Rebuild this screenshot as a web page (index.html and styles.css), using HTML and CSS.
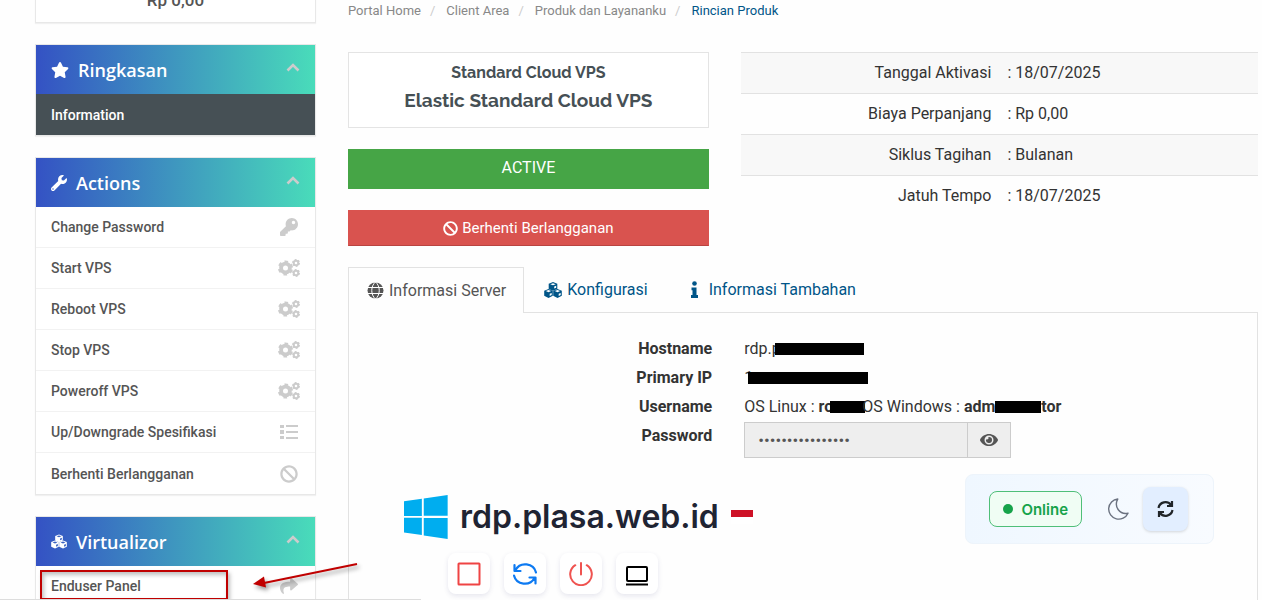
FILE: index.html
```html
<!DOCTYPE html>
<html lang="id">
<head>
    <meta charset="UTF-8">
    <meta name="viewport" content="width=device-width, initial-scale=1.0">
    <title>Rincian Produk</title>
    <link rel="stylesheet" href="styles.css">
</head>
<body>
    <!-- shared icons -->
    <svg class="sprite" aria-hidden="true">
        <symbol id="chevron" viewBox="0 0 14 9"><path d="M1.5 7.5L7 2l5.5 5.5" fill="none" stroke="currentColor" stroke-width="2.6"/></symbol>
        <symbol id="cogs" viewBox="0 0 22 18">
            <g fill="none" stroke="currentColor">
                <circle cx="7.500" cy="9" r="4.400" stroke-width="3.800"/>
                <circle cx="7.500" cy="9" r="6.500" stroke-width="2.200" stroke-dasharray="3.600 3.207" stroke-dashoffset="-1.600"/>
                <circle cx="18" cy="4" r="2.300" stroke-width="2"/>
                <circle cx="18" cy="4" r="3.300" stroke-width="1.400" stroke-dasharray="1.800 1.656"/>
                <circle cx="18" cy="14" r="2.300" stroke-width="2"/>
                <circle cx="18" cy="14" r="3.300" stroke-width="1.400" stroke-dasharray="1.800 1.656"/>
            </g>
        </symbol>
        <symbol id="ban" viewBox="0 0 512 512"><path fill="currentColor" d="M256 8C119.034 8 8 119.033 8 256s111.034 248 248 248 248-111.034 248-248S392.967 8 256 8zm130.108 117.892c65.448 65.448 70 165.481 20.677 235.637L150.470 105.216c70.204-49.356 170.226-44.735 235.638 20.676zM125.892 386.108c-65.448-65.448-70-165.481-20.677-235.637L361.530 406.784c-70.203 49.356-170.226 44.736-235.638-20.676z"/></symbol>
        <symbol id="cubes" viewBox="0 0 18 16">
            <g fill="currentColor">
                <path d="M9 0l4.300 1.700v5.300L9 8.800 4.700 7V1.700z"/>
                <path d="M4.500 7l4.300 1.700v5.100L4.500 15.900.2 13.800V8.700z"/>
                <path d="M13.500 7l4.300 1.700v5.100l-4.300 2.100-4.300-2.100V8.700z"/>
            </g>
            <path class="cut" d="M6.300 2.200L9 3.300l2.700-1.100L9 1.200zM10.200 6.600V4.600l2-.8v2zM1.800 9.100l2.700 1.100 2.700-1.100-2.700-1zM5.700 14v-2.300l2-.8v2.200zM10.800 9.100l2.700 1.100 2.700-1.100-2.700-1zM14.700 14v-2.300l2-.8v2.200z"/>
        </symbol>
    </svg>

    <div class="page">
        <aside class="sidebar">
            <div class="panel credit">Rp 0,00</div>

            <section class="panel">
                <h3 class="panel-head">
                    <svg width="18" height="16" viewBox="0 0 576 512"><path fill="currentColor" d="M259.300 17.800L194 150.200 47.900 171.500c-26.200 3.800-36.700 36.100-17.700 54.600l105.700 103-25 145.500c-4.500 26.300 23.200 46 46.400 33.700L288 439.600l130.700 68.700c23.200 12.200 50.900-7.400 46.400-33.700l-25-145.500 105.700-103c19-18.500 8.500-50.800-17.700-54.600L382 150.200 316.700 17.800c-11.700-23.600-45.600-23.900-57.400 0z"/></svg>
                    Ringkasan
                    <svg class="chevron" width="14" height="9"><use href="#chevron"/></svg>
                </h3>
                <a href="#" class="item active">Information</a>
            </section>

            <section class="panel">
                <h3 class="panel-head">
                    <svg width="16" height="16" viewBox="0 0 512 512"><path fill="currentColor" d="M507.730 109.100c-2.240-9.030-13.540-12.090-20.120-5.510l-74.360 74.360-67.880-11.310-11.310-67.880 74.360-74.360c6.620-6.620 3.430-17.900-5.660-20.160-47.380-11.740-99.550.91-136.580 37.930-39.640 39.640-50.550 97.100-34.050 147.200L18.740 402.760c-24.990 24.990-24.990 65.510 0 90.500 24.990 24.990 65.510 24.990 90.500 0l213.210-213.210c50.120 16.710 107.470 5.680 147.370-34.220 37.070-37.070 49.700-89.320 37.910-136.730zM64 472c-13.250 0-24-10.750-24-24 0-13.260 10.750-24 24-24s24 10.740 24 24c0 13.250-10.750 24-24 24z"/></svg>
                    Actions
                    <svg class="chevron" width="14" height="9"><use href="#chevron"/></svg>
                </h3>
                <a href="#" class="item">Change Password
                    <span class="icon"><svg width="18" height="18" viewBox="0 0 512 512"><path fill="currentColor" d="M512 176.001C512 273.203 433.202 352 336 352c-11.220 0-22.190-1.062-32.827-3.069l-24.012 27.014A23.999 23.999 0 0 1 261.223 384H224v40c0 13.255-10.745 24-24 24h-40v40c0 13.255-10.745 24-24 24H24c-13.255 0-24-10.745-24-24v-78.059c0-6.365 2.529-12.470 7.029-16.971l161.802-161.802C163.108 213.814 160 195.271 160 176 160 78.798 238.797.001 335.999 0 433.488-.001 512 78.511 512 176.001zM336 128c0 26.510 21.490 48 48 48s48-21.490 48-48-21.490-48-48-48-48 21.490-48 48z"/></svg></span>
                </a>
                <a href="#" class="item">Start VPS <span class="icon"><svg width="22" height="18"><use href="#cogs"/></svg></span></a>
                <a href="#" class="item">Reboot VPS <span class="icon"><svg width="22" height="18"><use href="#cogs"/></svg></span></a>
                <a href="#" class="item">Stop VPS <span class="icon"><svg width="22" height="18"><use href="#cogs"/></svg></span></a>
                <a href="#" class="item">Poweroff VPS <span class="icon"><svg width="22" height="18"><use href="#cogs"/></svg></span></a>
                <a href="#" class="item">Up/Downgrade Spesifikasi
                    <span class="icon"><svg width="18" height="16" viewBox="0 0 18 16" fill="currentColor"><path d="M0 1h4v3H0zM0 6h4v4H0zM0 12h4v3H0zM6 1h12v2H6zM6 7h12v2H6zM6 13h12v2H6z"/></svg></span>
                </a>
                <a href="#" class="item">Berhenti Berlangganan <span class="icon"><svg width="18" height="18"><use href="#ban"/></svg></span></a>
            </section>

            <section class="panel">
                <h3 class="panel-head">
                    <svg width="16" height="15"><use href="#cubes"/></svg>
                    Virtualizor
                    <svg class="chevron" width="14" height="9"><use href="#chevron"/></svg>
                </h3>
                <a href="#" class="item">Enduser Panel
                    <span class="icon"><svg width="18" height="18" viewBox="0 0 512 512"><path fill="currentColor" d="M503.691 189.836L327.687 37.851C312.281 24.546 288 35.347 288 56.015v80.053C127.371 137.907 0 170.100 0 322.326c0 61.441 39.581 122.309 83.333 154.132 13.653 9.931 33.111-2.533 28.077-18.631C66.066 312.814 132.917 274.316 288 272.085V360c0 20.700 24.300 31.453 39.687 18.164l176.004-152c11.071-9.562 11.086-26.753 0-36.328z"/></svg></span>
                </a>
                <div class="callout"></div>
                <svg class="arrow" width="112" height="34" viewBox="0 0 112 34">
                    <path d="M107 5L14 24" stroke="#c00000" stroke-width="2"/>
                    <path d="M3 25l11-7.500 2 11z" fill="#c00000"/>
                </svg>
            </section>
        </aside>

        <main class="content">
            <nav class="breadcrumb">
                <a href="#">Portal Home</a>
                <a href="#">Client Area</a>
                <a href="#">Produk dan Layananku</a>
                <a href="#" class="current">Rincian Produk</a>
            </nav>

            <div class="summary">
                <div class="product">
                    <div class="product-name">
                        <h4>Standard Cloud VPS</h4>
                        <h3>Elastic Standard Cloud VPS</h3>
                    </div>
                    <div class="status">ACTIVE</div>
                    <button class="cancel"><svg width="15" height="15"><use href="#ban"/></svg> Berhenti Berlangganan</button>
                </div>
                <table class="billing">
                    <tr><th scope="row">Tanggal Aktivasi</th><td>: 18/07/2025</td></tr>
                    <tr><th scope="row">Biaya Perpanjang</th><td>: Rp 0,00</td></tr>
                    <tr><th scope="row">Siklus Tagihan</th><td>: Bulanan</td></tr>
                    <tr><th scope="row">Jatuh Tempo</th><td>: 18/07/2025</td></tr>
                </table>
            </div>

            <div class="tabs">
                <a href="#" class="tab selected">
                    <svg width="17" height="17" viewBox="0 0 17 17">
                        <circle cx="8.500" cy="8.500" r="8" fill="currentColor"/>
                        <path d="M0 5.500h17M0 11.500h17M8.500 0c-5 4-5 13 0 17M8.500 0c5 4 5 13 0 17" fill="none" stroke="#fff" stroke-width="1"/>
                    </svg>
                    Informasi Server
                </a>
                <a href="#" class="tab">
                    <svg class="on-white" width="18" height="16"><use href="#cubes"/></svg>
                    Konfigurasi
                </a>
                <a href="#" class="tab">
                    <svg width="17" height="17" viewBox="0 0 17 17" fill="currentColor"><circle cx="7.500" cy="2.500" r="2.300"/><path d="M4.500 6.500h5V14H11v3H4v-3h1.500V9.200h-1z"/></svg>
                    Informasi Tambahan
                </a>
            </div>

            <div class="pane">
                <dl class="details">
                    <dt>Hostname</dt>
                    <dd>rdp.p<span class="mask mask-host"></span></dd>
                    <dt>Primary IP</dt>
                    <dd>1<span class="mask mask-ip"></span></dd>
                    <dt>Username</dt>
                    <dd>OS Linux : <b>ro</b><span class="mask mask-root"></span>OS Windows : <b>adm</b><span class="mask mask-admin"></span><b>tor</b></dd>
                    <dt><label for="password">Password</label></dt>
                    <dd class="password">
                        <input type="password" id="password" value="xxxxxxxxxxxxxxxx" readonly>
                        <button aria-label="Show password"><svg width="18" height="16" viewBox="0 0 576 512"><path fill="currentColor" d="M572.520 241.400C518.290 135.590 410.930 64 288 64S57.680 135.640 3.480 241.410a32.350 32.350 0 0 0 0 29.190C57.710 376.410 165.070 448 288 448s230.320-71.640 284.520-177.410a32.350 32.350 0 0 0 0-29.190zM288 400a144 144 0 1 1 144-144 143.930 143.930 0 0 1-144 144zm0-240a95.310 95.310 0 0 0-25.310 3.790 47.850 47.850 0 0 1-66.900 66.900A95.780 95.780 0 1 0 288 160z"/></svg></button>
                    </dd>
                </dl>

                <div class="server">
                    <div class="server-info">
                        <div class="server-title">
                            <svg width="44" height="44" viewBox="0 0 88 88" fill="#00adef"><path d="M0 12.400l35.700-4.900v34.500H0zM39.500 6.900L87.300 0v41.500H39.500zM0 45.500h35.700v34.500L0 75.100zM39.500 45.800h47.800V88l-47.800-6.900z"/></svg>
                            <h2>rdp.plasa.web.id</h2>
                            <span class="flag"></span>
                        </div>
                        <div class="power">
                            <button aria-label="Stop"><svg width="24" height="24" viewBox="0 0 24 24" fill="none" stroke="#ef4444" stroke-width="2"><rect x="1.500" y="1.500" width="21" height="21" rx="0.500"/></svg></button>
                            <button aria-label="Restart"><svg width="24" height="24" viewBox="0 0 24 24" fill="none" stroke="#0d7af2" stroke-width="2.200" stroke-linecap="round" stroke-linejoin="round"><path d="M23 10.500A11 10.500 0 0 0 2.500 8M1.500 3v6h6M1 13.500A11 10.500 0 0 0 21.500 16M22.500 21.500v-6h-6"/></svg></button>
                            <button aria-label="Power off"><svg width="24" height="24" viewBox="0 0 24 24" fill="none" stroke="#ef5350" stroke-width="2" stroke-linecap="round"><path d="M12 1v11.500M6.300 3.200a10.800 10.800 0 1 0 11.400 0"/></svg></button>
                            <button aria-label="Console"><svg width="24" height="24" viewBox="0 0 24 24" fill="none" stroke="#000" stroke-width="2"><rect x="2" y="5" width="20" height="14" rx="1"/><path d="M1 22.500h22"/></svg></button>
                        </div>
                    </div>
                    <div class="server-state">
                        <span class="online">Online</span>
                        <button class="theme" aria-label="Dark mode"><svg width="22" height="22" viewBox="0 0 22 22" fill="none" stroke="#6b7280" stroke-width="1.400" stroke-linejoin="round"><path d="M10.800 1A10.100 10.100 0 1 0 21 15.200C13 17 6.500 9 10.800 1z"/></svg></button>
                        <button class="reload" aria-label="Reload"><svg width="17" height="18" viewBox="0 0 17 18" fill="none" stroke="#212529" stroke-width="2.200"><path d="M1.500 8A7 7 0 0 1 14 5M15 1v5H10M15.500 10A7 7 0 0 1 3 13M2 17v-5h5"/></svg></button>
                    </div>
                </div>
            </div>
        </main>
    </div>
    <div class="link-bar"></div>
</body>
</html>
```

FILE: styles.css
```css
* {
    box-sizing: border-box;
}
body {
    margin: 0;
    height: 100vh;
    overflow: hidden;
    position: relative;
    background-color: #fefefe;
    font-family: Roboto, Arial, sans-serif;
    font-size: 16px;
    color: #333;
}
a {
    text-decoration: none;
    color: #058;
}
h2, h3, h4 {
    margin: 0;
}
button {
    font-family: inherit;
    padding: 0;
    cursor: pointer;
}
.sprite {
    display: none;
}
.page {
    display: grid;
    grid-template-columns: 281px 1fr;
    gap: 32px;
    padding: 0 4px 0 35px;
}

/* sidebar */
.sidebar {
    display: flex;
    flex-direction: column;
    gap: 21px;
    margin-top: -20px;
}
.panel {
    position: relative;
    background-color: #fff;
    border: 1px solid #e8e8e8;
    box-shadow: 0 1px 1px rgba(0, 0, 0, 0.05);
}
.credit {
    height: 43px;
    line-height: 38px;
    text-align: center;
    font-size: 17px;
    font-weight: 500;
    color: #555;
}
.panel-head {
    display: flex;
    align-items: center;
    gap: 9px;
    height: 49px;
    padding: 0 15px;
    background: linear-gradient(to right, #3452c4, #49dcba);
    color: #fff;
    font-family: "Open Sans", sans-serif;
    font-size: 18px;
    font-weight: 600;
}
.chevron {
    margin-left: auto;
    margin-bottom: 4px;
    color: #ccc;
}
.cut {
    fill: var(--cut, #3a62c2);
}
.on-white {
    --cut: #fff;
}
.item {
    display: flex;
    align-items: center;
    justify-content: space-between;
    height: 41px;
    padding: 0 15px;
    border-bottom: 1px solid #f2f2f2;
    font-size: 14px;
    font-weight: 500;
    color: #555;
}
.item:last-child {
    border-bottom: none;
}
.item.active {
    background-color: #465055;
    color: #fff;
}
.icon {
    display: flex;
    justify-content: center;
    width: 22px;
    color: #ccc;
}

/* marker around the panel link */
.callout {
    position: absolute;
    top: 53px;
    left: 4px;
    width: 188px;
    height: 30px;
    border: 2px solid #c00000;
    box-shadow: 2px 3px 4px rgba(0, 0, 0, 0.25), inset 2px 3px 4px rgba(0, 0, 0, 0.25);
}
.arrow {
    position: absolute;
    top: 42px;
    left: 214px;
    filter: drop-shadow(2px 3px 2px rgba(0, 0, 0, 0.4));
}

/* content */
.content {
    display: flex;
    flex-direction: column;
    min-width: 0;
}
.breadcrumb {
    display: flex;
    height: 52px;
    line-height: 21px;
    font-size: 13px;
}
.breadcrumb a {
    color: #888;
}
.breadcrumb a + a::before {
    content: "/";
    padding: 0 11px 0 9px;
    color: #ccc;
}
.breadcrumb .current {
    color: #058;
}
.summary {
    display: grid;
    grid-template-columns: 30fr 43fr;
    align-items: start;
    gap: 32px;
}
.product {
    display: flex;
    flex-direction: column;
    gap: 21px;
}
.product-name {
    height: 76px;
    padding-top: 8px;
    background-color: #fff;
    border: 1px solid #e4e4e4;
    text-align: center;
    font-family: Raleway, Lato, sans-serif;
    color: #465055;
}
.product-name h4 {
    font-size: 16px;
    line-height: 24px;
}
.product-name h3 {
    font-size: 19px;
    line-height: 30px;
}
.status {
    height: 40px;
    line-height: 38px;
    background-color: #46a546;
    text-align: center;
    color: #fff;
}
.cancel {
    display: flex;
    align-items: center;
    justify-content: center;
    gap: 4px;
    height: 36px;
    background-color: #d9534f;
    border: 1px solid #d9534f;
    border-bottom-color: #b94441;
    font-size: 15px;
    color: #fff;
}
.billing {
    width: 100%;
    table-layout: fixed;
    border-collapse: collapse;
}
.billing th, .billing td {
    height: 41px;
    padding: 0 8px 2px;
    border-top: 1px solid #e2e2e2;
    text-align: left;
    font-weight: 400;
}
.billing th {
    text-align: right;
}
.billing tr:nth-child(odd) {
    background-color: #f8f8f8;
}

/* tabs */
.tabs {
    display: flex;
    margin-top: 21px;
    border-bottom: 1px solid #e2e2e2;
}
.tab {
    display: flex;
    align-items: center;
    gap: 5px;
    height: 45px;
    padding: 0 18px 0 19px;
    border: 1px solid transparent;
}
.tab.selected {
    height: 46px;
    margin-bottom: -1px;
    padding: 0 17px 0 18px;
    background-color: #fefefe;
    border-color: #e2e2e2;
    border-bottom: none;
    color: #555;
}
.pane {
    min-height: 287px;
    padding-top: 21px;
    border: 1px solid #e2e2e2;
    border-top: none;
    border-bottom: none;
}
.details {
    display: grid;
    grid-template-columns: 40% 1fr;
    column-gap: 32px;
    margin: 0;
    line-height: 29px;
}
.details dt {
    text-align: right;
    font-weight: 700;
}
.details dd {
    margin: 0;
    white-space: nowrap;
}
.mask {
    display: inline-block;
    height: 12px;
    vertical-align: -1px;
    background-color: #000;
}
.mask-host {
    width: 89px;
    margin-left: -6px;
}
.mask-ip {
    width: 120px;
    margin-left: -5px;
}
.mask-root {
    width: 35px;
    margin: 0 -3px 0 -3px;
}
.mask-admin {
    width: 46px;
}
.password {
    display: flex;
    align-items: center;
    padding-top: 1px;
}
.password input {
    width: 224px;
    height: 36px;
    padding: 0 13px;
    background-color: #eee;
    border: 1px solid #ccc;
    border-radius: 0;
    outline: none;
    font-family: inherit;
    font-size: 17px;
    color: #555;
}
.password button {
    display: flex;
    align-items: center;
    justify-content: center;
    width: 44px;
    height: 36px;
    margin-left: -1px;
    background-color: #eee;
    border: 1px solid #ccc;
    color: #555;
}

/* server card */
.server {
    display: flex;
    justify-content: space-between;
    align-items: flex-start;
    padding: 16px 43px 0 55px;
    font-family: Inter, sans-serif;
}
.server-info {
    padding-top: 21px;
}
.server-title {
    display: flex;
    align-items: center;
    gap: 12px;
}
.server-title h2 {
    font-size: 32px;
    font-weight: 600;
    line-height: 44px;
    color: #1f2433;
}
.flag {
    width: 22px;
    height: 14px;
    background: linear-gradient(#ce1126 50%, #fff 50%);
}
.power {
    display: flex;
    gap: 14px;
    padding: 14px 0 0 44px;
}
.power button {
    display: flex;
    align-items: center;
    justify-content: center;
    width: 42px;
    height: 41px;
    background-color: #fff;
    border: none;
    border-radius: 8px;
    box-shadow: 0 2px 5px rgba(60, 60, 120, 0.12);
}
.server-state {
    display: flex;
    align-items: center;
    height: 70px;
    padding: 0 25px 0 23px;
    background: linear-gradient(to right, #eff7ff, #f8fbff);
    border: 1px solid #edf4fb;
    border-radius: 8px;
}
.online {
    display: flex;
    align-items: center;
    gap: 8px;
    height: 36px;
    padding: 0 13px;
    background-color: #f0fdf4;
    border: 1px solid #4fbf78;
    border-radius: 8px;
    font-size: 15px;
    font-weight: 600;
    color: #16a34a;
}
.online::before {
    content: "";
    width: 10px;
    height: 10px;
    border-radius: 50%;
    background-color: #16a34a;
}
.theme {
    display: flex;
    margin: 0 14px 0 25px;
    background: none;
    border: none;
}
.reload {
    display: flex;
    align-items: center;
    justify-content: center;
    width: 45px;
    height: 44px;
    background-color: #e2eeff;
    border: none;
    border-radius: 8px;
    box-shadow: 0 1px 3px rgba(0, 0, 0, 0.15);
}

/* edge of the browser's link preview */
.link-bar {
    position: absolute;
    left: 0;
    bottom: 0;
    width: 421px;
    height: 1px;
    background-color: #ddd;
}
```
